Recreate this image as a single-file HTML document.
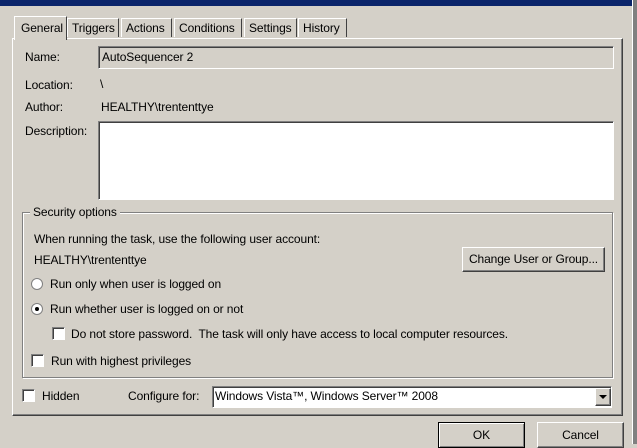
<!DOCTYPE html>
<html><head><style>
body{margin:0;width:637px;height:444px;overflow:hidden;background:#d4d0c8;font-family:"Liberation Sans",sans-serif;font-size:12px;letter-spacing:-0.1px;color:#000;position:relative}
.a{position:absolute;white-space:nowrap}
.sunk{position:absolute;background:#fff;border-top:1px solid #808080;border-left:1px solid #808080;border-right:1px solid #fff;border-bottom:1px solid #fff;box-shadow:inset 1px 1px 0 #404040}
.btn{position:absolute;background:#d4d0c8;border-top:1px solid #fff;border-left:1px solid #fff;border-right:1px solid #404040;border-bottom:1px solid #404040;box-shadow:inset -1px -1px 0 #808080;text-align:center;box-sizing:border-box}
.cb{position:absolute;width:11px;height:11px;background:#fff;border-top:1px solid #808080;border-left:1px solid #808080;border-right:1px solid #fff;border-bottom:1px solid #fff;box-shadow:inset 1px 1px 0 #404040}
.rb{position:absolute;width:10px;height:10px;border-radius:50%;background:#fff;border:1px solid #808080}
.tab{position:absolute;top:18px;height:19px;border-top:1px solid #fff;border-left:1px solid #fff;border-right:1px solid #404040;line-height:19px;padding:0 4px;box-sizing:border-box}
</style></head><body>
<div class="a" style="left:0;top:0;width:632px;height:6px;background:#0a246a"></div>
<div class="a" style="left:632px;top:0;width:5px;height:444px;background:#808080;border-left:1px solid #fff"></div>
<div class="a" style="left:12px;top:38px;width:609px;height:376px;border-top:1px solid #fff;border-left:1px solid #fff;border-right:1px solid #404040;border-bottom:1px solid #404040;box-shadow:inset -1px -1px 0 #808080"></div>
<div class="tab" style="left:67px;width:52px">Triggers</div>
<div class="tab" style="left:121px;width:51px">Actions</div>
<div class="tab" style="left:174px;width:68px">Conditions</div>
<div class="tab" style="left:244px;width:53px">Settings</div>
<div class="tab" style="left:298px;width:49px">History</div>
<div class="a" style="left:14px;top:16px;width:53px;height:24px;background:#d4d0c8;border-top:1px solid #fff;border-left:1px solid #fff;border-right:1px solid #404040;line-height:22px;padding-left:6px;box-sizing:border-box">General</div>

<div class="a" style="left:25px;top:50px">Name:</div>
<div class="sunk" style="left:98px;top:46px;width:514px;height:21px;background:#d4d0c8"></div>
<div class="a" style="left:102px;top:50px">AutoSequencer 2</div>
<div class="a" style="left:25px;top:78px">Location:</div>
<div class="a" style="left:100px;top:77px">\</div>
<div class="a" style="left:25px;top:100px">Author:</div>
<div class="a" style="left:101px;top:100px">HEALTHY\trententtye</div>
<div class="a" style="left:25px;top:124px">Description:</div>
<div class="sunk" style="left:98px;top:121px;width:514px;height:77px"></div>

<div class="a" style="left:22px;top:212px;width:589px;height:164px;border:1px solid #808080;box-shadow:1px 1px 0 #fff, inset 1px 1px 0 #fff"></div>
<div class="a" style="left:30px;top:205px;background:#d4d0c8;padding:0 3px">Security options</div>
<div class="a" style="left:34px;top:232px">When running the task, use the following user account:</div>
<div class="a" style="left:34px;top:253px">HEALTHY\trententtye</div>
<div class="btn" style="left:462px;top:247px;width:143px;height:25px;line-height:23px">Change User or Group...</div>
<div class="rb" style="left:31px;top:278px"></div>
<div class="a" style="left:50px;top:277px">Run only when user is logged on</div>
<div class="rb" style="left:31px;top:303px"></div>
<div class="a" style="left:35px;top:307px;width:4px;height:4px;background:#000;border-radius:50%"></div>
<div class="a" style="left:50px;top:302px">Run whether user is logged on or not</div>
<div class="cb" style="left:52px;top:327px"></div>
<div class="a" style="left:71px;top:327px">Do not store password.&nbsp; The task will only have access to local computer resources.</div>
<div class="cb" style="left:31px;top:354px"></div>
<div class="a" style="left:51px;top:354px">Run with highest privileges</div>

<div class="cb" style="left:22px;top:389px"></div>
<div class="a" style="left:42px;top:389px">Hidden</div>
<div class="a" style="left:128px;top:389px">Configure for:</div>
<div class="sunk" style="left:212px;top:386px;width:398px;height:20px"></div>
<div class="a" style="left:215px;top:389px">Windows Vista™, Windows Server™ 2008</div>
<div class="btn" style="left:595px;top:388px;width:16px;height:18px"></div>
<div class="a" style="left:599px;top:395px;width:0;height:0;border-left:4px solid transparent;border-right:4px solid transparent;border-top:4px solid #000"></div>

<div class="btn" style="left:438px;top:422px;width:87px;height:26px;line-height:24px;border:1px solid #000;box-shadow:inset 1px 1px 0 #fff,inset -1px -1px 0 #808080">OK</div>
<div class="btn" style="left:537px;top:422px;width:87px;height:26px;line-height:24px">Cancel</div>
</body></html>
